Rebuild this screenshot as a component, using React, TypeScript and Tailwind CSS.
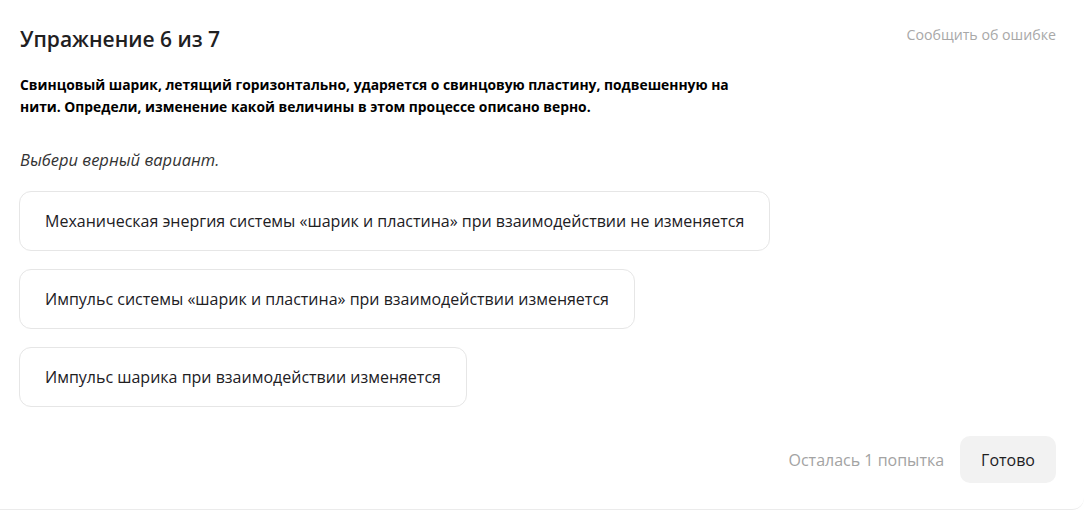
import React from 'react';

const options = [
    'Механическая энергия системы «шарик и пластина» при взаимодействии не изменяется',
    'Импульс системы «шарик и пластина» при взаимодействии изменяется',
    'Импульс шарика при взаимодействии изменяется',
];

const App: React.FC = () => {
    return (
        <div className="w-[1084px] h-[515px] bg-white text-[#21201f] font-['Open_Sans',sans-serif] overflow-hidden">
            <div className="h-[510px] border-b border-[#ebebeb] rounded-br-[12px] flex flex-col px-5 pt-[23px]">
                {/* Header */}
                <div className="flex justify-between items-start">
                    <h1 className="text-[21px] leading-[32px] font-semibold">Упражнение 6 из 7</h1>
                    <button className="text-[14.2px] leading-[22px] text-[#a8a8a8] mr-[8px] mt-[1px]">Сообщить об ошибке</button>
                </div>

                {/* Question */}
                <p className="mt-[19px] max-w-[740px] text-[13.85px] leading-[22px] font-bold text-black">
                    Свинцовый шарик, летящий горизонтально, ударяется о свинцовую пластину, подвешенную на нити. Определи, изменение какой величины в этом процессе описано верно.
                </p>
                <p className="mt-[30px] text-[16.5px] leading-[24px] italic text-[#333]">Выбери верный вариант.</p>

                {/* Options */}
                <div className="mt-[19px] flex flex-col items-start gap-[18px]">
                    {options.map(opt => (
                        <div key={opt} className="border border-[#e6e6e6] rounded-[12px] pl-[25px] pr-[25px] h-[60px] flex items-center text-[16px] leading-[24px] -ml-px">
                            {opt}
                        </div>
                    ))}
                </div>

                {/* Footer */}
                <div className="mt-[29px] flex justify-end items-center gap-4 mr-[8px]">
                    <span className="text-[16px] text-[#a3a3a3]">Осталась 1 попытка</span>
                    <button className="h-[47px] px-[21px] rounded-[10px] bg-[#f2f2f2] text-[16px]">Готово</button>
                </div>
            </div>
        </div>
    );
};

export default App;
